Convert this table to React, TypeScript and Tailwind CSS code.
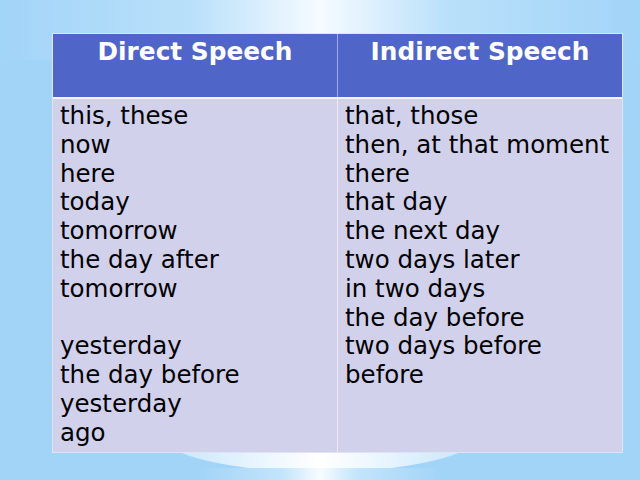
const direct = [
  'this, these',
  'now',
  'here',
  'today',
  'tomorrow',
  'the day after',
  'tomorrow',
  '',
  'yesterday',
  'the day before',
  'yesterday',
  'ago',
]

const indirect = [
  'that, those',
  'then, at that moment',
  'there',
  'that day',
  'the next day',
  'two days later',
  'in two days',
  'the day before',
  'two days before',
  'before',
]

function Lines({ items }: { items: string[] }) {
  return (
    <div className="px-[7px] pt-[3px]">
      {items.map((t, i) => (
        <div key={i} className="h-[28.8px] whitespace-nowrap">
          {t}
        </div>
      ))}
    </div>
  )
}

export default function App() {
  return (
    <div
      className="relative w-[640px] h-[480px] overflow-hidden bg-[#a2d4f8] text-[24.5px] leading-[28.8px] text-black"
      style={{ fontFamily: '"DejaVu Sans", Verdana, sans-serif' }}
    >
      {/* background glows */}
      <div className="absolute left-0 top-0 w-full h-[60px] bg-[linear-gradient(90deg,#a2d4f8_0%,#b9e0fa_30%,#f6fbff_50%,#b9e0fa_70%,#a2d4f8_100%)]" />
      <div className="absolute left-[160px] top-[396px] w-[320px] h-[76px] rounded-[50%] bg-[linear-gradient(90deg,#c3e4fb_0%,#e8f5fe_30%,#ffffff_50%,#e8f5fe_70%,#c3e4fb_100%)]" />
      <div className="absolute left-[200px] top-[468px] w-[240px] h-[12px] bg-[linear-gradient(90deg,#a2d4f8_0%,#c4e5fb_35%,#f8fcff_50%,#c4e5fb_65%,#a2d4f8_100%)]" />

      <div className="relative pt-[33px] pl-[52px]">
        <div className="w-[571px] border border-[#dfe4f4] bg-[#d1d1ec]">
          <div className="grid grid-cols-[285px_284px] h-[63px] bg-[#4f65c7] text-white font-bold text-[24.8px]">
            <div className="pt-[4px] text-center border-r border-[#9eaae0]">Direct Speech</div>
            <div className="pt-[4px] text-center">Indirect Speech</div>
          </div>
          <div className="h-[2px] bg-[#f2f3fb]" />
          <div className="grid grid-cols-[285px_284px] h-[353px]">
            <div className="border-r border-[#eceaf7]">
              <Lines items={direct} />
            </div>
            <div>
              <Lines items={indirect} />
            </div>
          </div>
        </div>
      </div>
    </div>
  )
}
